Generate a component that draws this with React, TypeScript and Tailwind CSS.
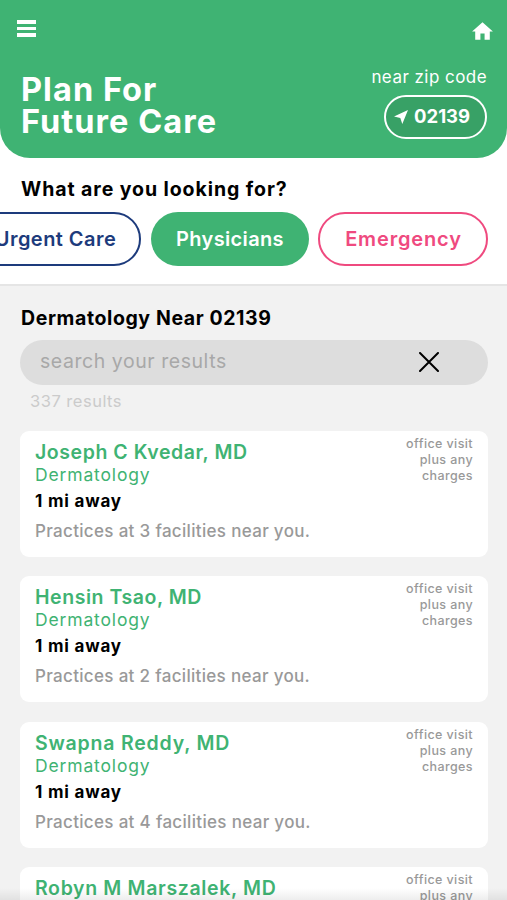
import { MdHome } from "react-icons/md";

const doctors = [
  { name: "Joseph C Kvedar, MD", facilities: 3, spacing: "tracking-[0.56px]" },
  { name: "Hensin Tsao, MD", facilities: 2, spacing: "tracking-[0.55px]" },
  { name: "Swapna Reddy, MD", facilities: 4, spacing: "tracking-[0.8px]" },
  { name: "Robyn M Marszalek, MD", facilities: 2, spacing: "tracking-[0.65px]" },
];

function Header() {
  return (
    <header className="h-[158px] shrink-0 rounded-b-[30px] bg-[#3fb373] text-white">
      <div className="flex h-[62px] items-start justify-between pl-[17px] pr-[12px] pt-5">
        <button aria-label="Menu" className="flex w-[19px] flex-col gap-[3px]">
          <span className="h-[3.5px] bg-white" />
          <span className="h-[3.5px] bg-white" />
          <span className="h-[3.5px] bg-white" />
        </button>
        <MdHome className="-mt-px size-[25px]" />
      </div>
      <div className="flex justify-between pl-[21px] pr-5">
        <h1 className="mt-3 whitespace-nowrap text-[32.5px] font-bold leading-8 tracking-[1.05px]">
          <span className="block">Plan For</span>
          <span className="block">Future Care</span>
        </h1>
        <div className="flex flex-col items-end">
          <span className="mt-1 whitespace-nowrap text-[17px] leading-[22px] tracking-[0.45px]">near zip code</span>
          <button className="mt-[7px] flex h-11 w-[103px] items-center rounded-full border-2 border-white bg-[#38a166] pl-2">
            <svg viewBox="0 0 14 14" className="size-3.5 fill-white">
              <path d="M14 0 8.3 14 6.3 8 0 6.5Z" />
            </svg>
            <span className="-mt-0.5 ml-[6px] text-[18.5px] font-bold leading-6">02139</span>
          </button>
        </div>
      </div>
    </header>
  );
}

function Categories() {
  return (
    <section className="h-[128px] shrink-0 overflow-hidden border-b-2 border-[#e5e5e5] bg-white pt-[19px]">
      <h2 className="ml-[21px] whitespace-nowrap text-[19.5px] font-bold leading-6 tracking-[0.92px]">What are you looking for?</h2>
      <div className="-ml-[31px] mt-[11px] flex h-[54px] gap-[10px] whitespace-nowrap text-[20px] font-semibold">
        <button className="w-[172px] shrink-0 rounded-full border-2 border-[#1d3b7c] pl-px tracking-[0.45px] text-[#1d3b7c]">Urgent Care</button>
        <button className="w-[158px] shrink-0 rounded-full bg-[#3fb373] tracking-[0.35px] text-white">Physicians</button>
        <button className="-ml-px w-[170px] shrink-0 rounded-full border-2 border-[#ef4a7f] pl-px tracking-[0.85px] text-[#ef4a7f]">Emergency</button>
      </div>
    </section>
  );
}

function DoctorCard({ name, facilities, spacing }: { name: string; facilities: number; spacing: string }) {
  return (
    <article className="flex h-[126px] shrink-0 justify-between rounded-[9px] bg-white px-[15px]">
      <div className="whitespace-nowrap pt-[9px]">
        <h3 className={"text-[19.5px] font-semibold leading-6 text-[#3fb373] " + spacing}>{name}</h3>
        <p className="text-[17.5px] leading-[22px] tracking-[0.85px] text-[#3fb373]">Dermatology</p>
        <p className="mt-1 text-[17px] font-bold leading-[22px] tracking-[0.8px]">1 mi away</p>
        <p className="mt-2 text-[17px] font-medium leading-[22px] tracking-[0.32px] text-[#999]">Practices at {facilities} facilities near you.</p>
      </div>
      <p className="w-[90px] pt-[5px] text-right text-[12.5px] font-medium leading-4 tracking-[0.4px] text-[#999]">
        office visit
        <br />
        plus any
        <br />
        charges
      </p>
    </article>
  );
}

export default function App() {
  return (
    <div className="relative flex h-[900px] w-full flex-col overflow-hidden bg-white font-['Inter',sans-serif] text-black">
      <Header />
      <Categories />
      <main className="flex min-h-0 flex-1 flex-col bg-[#f2f2f2] pl-5 pr-[19px] pt-5">
        <h2 className="ml-px whitespace-nowrap text-[19.5px] font-bold leading-6 tracking-[0.6px]">Dermatology Near 02139</h2>
        <div className="mt-[10px] flex h-[45px] shrink-0 items-center justify-between rounded-full bg-[#ddd] pl-5 pr-[49px]">
          <span className="mb-px text-[19.5px] tracking-[0.55px] text-[#a8a8a8]">search your results</span>
          <svg viewBox="0 0 20 20" className="-mt-px size-5 fill-none stroke-black stroke-2" strokeLinecap="round">
            <path d="m1 1 18 18M19 1 1 19" />
          </svg>
        </div>
        <p className="ml-[10px] mt-[5px] text-[16.5px] leading-[22px] tracking-[0.5px] text-[#cbcbcb]">337 results</p>
        <div className="mt-[19px] flex flex-col gap-[19.4px]">
          {doctors.map((d) => (
            <DoctorCard key={d.name} {...d} />
          ))}
        </div>
      </main>
      <div className="pointer-events-none absolute inset-x-0 bottom-0 h-3 bg-linear-to-b from-transparent to-black/7" />
    </div>
  );
}
